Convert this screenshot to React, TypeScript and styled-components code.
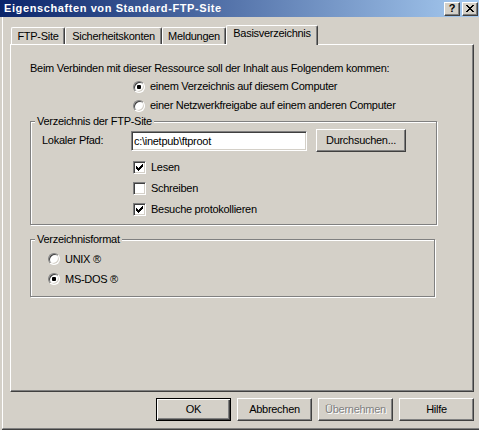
import React from "react";
import styled, { createGlobalStyle, css } from "styled-components";

const FACE = "#d4d0c8";
const SHADOW = "#808080";
const DARK = "#404040";

const Global = createGlobalStyle`
  html, body { margin: 0; padding: 0; background: ${FACE}; }
  body { font-family: "Liberation Sans", Arial, sans-serif; font-size: 11px; color: #000; }
  * { box-sizing: border-box; }
`;

const Window = styled.div`
  width: 479px;
  height: 430px;
  background: ${FACE};
  display: flex;
  flex-direction: column;
  overflow: hidden;
  font-family: "Liberation Sans", Arial, sans-serif;
  font-size: 11px;
  letter-spacing: -0.28px;
  color: #000;
`;

const TitleBar = styled.div`
  height: 17px;
  flex: none;
  display: flex;
  align-items: center;
  background: linear-gradient(to right, #0a246a, #a6caf0);
  padding: 0 1px 0 4px;
`;

const Title = styled.div`
  flex: 1;
  color: #fff;
  font-weight: bold;
  letter-spacing: 0.6px;
  line-height: 13px;
  white-space: nowrap;
`;

const CaptionGroup = styled.div`
  display: flex;
  gap: 2px;
  align-self: flex-start;
  margin-top: 2px;
`;

const CaptionButton = styled.div`
  width: 16px;
  height: 14px;
  background: ${FACE};
  border: 1px solid;
  border-color: #fff ${DARK} ${DARK} #fff;
  box-shadow: inset -1px -1px ${SHADOW};
  display: flex;
  align-items: center;
  justify-content: center;
  font-weight: bold;
  font-size: 11px;
  line-height: 11px;
  letter-spacing: 0;
  padding-bottom: 1px;
`;

const Body = styled.div`
  margin-left: 2px;
  border-left: 1px solid #fff;
  border-bottom: 1px solid ${SHADOW};
  box-shadow: 0 1px ${DARK};
  padding: 8px 5px 7px 7px;
  display: flex;
  flex-direction: column;
`;

const TabRow = styled.div`
  display: flex;
  align-items: flex-end;
  height: 19px;
  padding-left: 1px;
  position: relative;
  z-index: 1;
`;

const Tab = styled.div<{ $active?: boolean; $w: number }>`
  width: ${(p) => p.$w}px;
  height: 17px;
  background: ${FACE};
  border-top: 1px solid #fff;
  border-left: 1px solid #fff;
  border-right: 1px solid ${DARK};
  box-shadow: inset -1px 0 ${SHADOW};
  border-top-left-radius: 2px;
  border-top-right-radius: 2px;
  text-align: center;
  line-height: 13px;
  padding-top: 2px;
  white-space: nowrap;
  ${(p) =>
    p.$active &&
    css`
      height: 20px;
      margin-bottom: -1px;
      padding-top: 1px;
    `}
`;

const Panel = styled.div`
  height: 348px;
  border-top: 1px solid #fff;
  border-left: 1px solid #fff;
  border-right: 1px solid ${DARK};
  border-bottom: 1px solid ${DARK};
  box-shadow: inset -1px -1px ${SHADOW};
  padding: 17px 0 0 19px;
  display: flex;
  flex-direction: column;
  align-items: flex-start;
`;

const Text = styled.div`
  line-height: 13px;
  white-space: nowrap;
`;

const OptionRow = styled.div<{ $h: number; $indent: number; $top?: number }>`
  display: flex;
  align-items: center;
  gap: 5px;
  height: ${(p) => p.$h}px;
  margin-left: ${(p) => p.$indent}px;
  margin-top: ${(p) => p.$top ?? 0}px;
  line-height: 13px;
  white-space: nowrap;
`;

const RadioCircle = styled.span<{ $checked?: boolean }>`
  position: relative;
  flex: none;
  width: 12px;
  height: 12px;
  border-radius: 50%;
  background: #fff;
  border: 1px solid;
  border-color: ${SHADOW} #fff #fff ${SHADOW};
  box-shadow: inset 1px 1px ${DARK}, inset -1px -1px ${FACE};
  ${(p) =>
    p.$checked &&
    css`
      &::after {
        content: "";
        position: absolute;
        left: 3px;
        top: 3px;
        width: 4px;
        height: 4px;
        border-radius: 1px;
        background: #000;
      }
    `}
`;

const CheckBox = styled.span`
  flex: none;
  width: 13px;
  height: 13px;
  background: #fff;
  border: 1px solid;
  border-color: ${SHADOW} #fff #fff ${SHADOW};
  box-shadow: inset 1px 1px ${DARK}, inset -1px -1px ${FACE};
  display: flex;
  align-items: flex-start;
  justify-content: flex-start;
  padding: 2px 0 0 2px;
`;

const Group = styled.fieldset<{ $w: number; $top?: number }>`
  width: ${(p) => p.$w}px;
  margin: ${(p) => p.$top ?? 0}px 0 0 0;
  padding: 0;
  min-width: 0;
  border: 1px solid ${SHADOW};
  box-shadow: inset 1px 1px #fff, 1px 1px #fff;
`;

const Legend = styled.legend`
  margin-left: 4px;
  padding: 0 2px;
  line-height: 13px;
  background: ${FACE};
  white-space: nowrap;
`;

const GroupBody = styled.div<{ $pad: string }>`
  padding: ${(p) => p.$pad};
  display: flex;
  flex-direction: column;
  align-items: flex-start;
`;

const PathRow = styled.div`
  display: flex;
  align-items: center;
  height: 23px;
`;

const FieldLabel = styled.span`
  width: 89px;
  line-height: 13px;
  white-space: nowrap;
`;

const TextInput = styled.input`
  width: 176px;
  height: 20px;
  margin: 0;
  padding: 0 0 0 2px;
  font: inherit;
  letter-spacing: inherit;
  color: #000;
  background: #fff;
  border: 1px solid;
  border-color: ${SHADOW} #fff #fff ${SHADOW};
  box-shadow: inset 1px 1px ${DARK}, inset -1px -1px ${FACE};
  outline: none;
`;

const Button = styled.button<{ $default?: boolean; $w?: number; $ml?: number }>`
  width: ${(p) => p.$w ?? 75}px;
  height: 23px;
  margin: 0 0 0 ${(p) => p.$ml ?? 0}px;
  padding: 0;
  font: inherit;
  letter-spacing: inherit;
  color: #000;
  background: ${FACE};
  border: 1px solid;
  border-color: #fff ${DARK} ${DARK} #fff;
  box-shadow: inset -1px -1px ${SHADOW};
  line-height: 13px;
  ${(p) =>
    p.$default &&
    css`
      border-color: #000;
      box-shadow: inset 1px 1px #fff, inset -1px -1px ${DARK}, inset -2px -2px ${SHADOW};
    `}
  &:disabled {
    color: ${SHADOW};
    text-shadow: 1px 1px #fff;
  }
`;

const ButtonRow = styled.div`
  display: flex;
  justify-content: flex-end;
  gap: 6px;
  margin-top: 6px;
`;

const CheckMark = () => (
  <svg width="7" height="7" viewBox="0 0 7 7" shapeRendering="crispEdges">
    <path
      d="M0 2h1v3H0z M1 3h1v3H1z M2 4h1v3H2z M3 3h1v3H3z M4 2h1v3H4z M5 1h1v3H5z M6 0h1v3H6z"
      fill="#000"
    />
  </svg>
);

const CloseGlyph = () => (
  <svg width="8" height="7" viewBox="0 0 8 7" shapeRendering="crispEdges">
    <path
      d="M0 0h2v1H0z M6 0h2v1H6z M1 1h2v1H1z M5 1h2v1H5z M2 2h4v1H2z M3 3h2v1H3z M2 4h4v1H2z M1 5h2v1H1z M5 5h2v1H5z M0 6h2v1H0z M6 6h2v1H6z"
      fill="#000"
    />
  </svg>
);

const Radio = ({ checked, label, h, indent, top }: { checked?: boolean; label: string; h: number; indent: number; top?: number }) => (
  <OptionRow $h={h} $indent={indent} $top={top}>
    <RadioCircle $checked={checked} />
    <span>{label}</span>
  </OptionRow>
);

const Check = ({ checked, label, top }: { checked?: boolean; label: string; top?: number }) => (
  <OptionRow $h={21} $indent={91} $top={top}>
    <CheckBox>{checked && <CheckMark />}</CheckBox>
    <span>{label}</span>
  </OptionRow>
);

export default function App() {
  return (
    <>
      <Global />
      <Window>
        <TitleBar>
          <Title>Eigenschaften von Standard-FTP-Site</Title>
          <CaptionGroup>
            <CaptionButton>?</CaptionButton>
            <CaptionButton>
              <CloseGlyph />
            </CaptionButton>
          </CaptionGroup>
        </TitleBar>
        <Body>
          <TabRow>
            <Tab $w={54}>FTP-Site</Tab>
            <Tab $w={97}>Sicherheitskonten</Tab>
            <Tab $w={64}>Meldungen</Tab>
            <Tab $w={92} $active>
              Basisverzeichnis
            </Tab>
          </TabRow>
          <Panel>
            <Text>Beim Verbinden mit dieser Ressource soll der Inhalt aus Folgendem kommen:</Text>
            <Radio checked label="einem Verzeichnis auf diesem Computer" h={19} indent={103} top={2} />
            <Radio label="einer Netzwerkfreigabe auf einem anderen Computer" h={19} indent={103} />
            <Group $w={407}>
              <Legend>Verzeichnis der FTP-Site</Legend>
              <GroupBody $pad="1px 0 4px 11px">
                <PathRow>
                  <FieldLabel>Lokaler Pfad:</FieldLabel>
                  <TextInput readOnly value="c:\inetpub\ftproot" />
                  <Button $w={90} $ml={9}>
                    Durchsuchen...
                  </Button>
                </PathRow>
                <Check checked label="Lesen" top={5} />
                <Check label="Schreiben" />
                <Check checked label="Besuche protokollieren" />
              </GroupBody>
            </Group>
            <Group $w={405} $top={8}>
              <Legend>Verzeichnisformat</Legend>
              <GroupBody $pad="3px 0 7px 0">
                <Radio label="UNIX ®" h={20} indent={17} />
                <Radio checked label="MS-DOS ®" h={20} indent={17} />
              </GroupBody>
            </Group>
          </Panel>
          <ButtonRow>
            <Button $default>OK</Button>
            <Button>Abbrechen</Button>
            <Button disabled>Übernehmen</Button>
            <Button>Hilfe</Button>
          </ButtonRow>
        </Body>
      </Window>
    </>
  );
}
